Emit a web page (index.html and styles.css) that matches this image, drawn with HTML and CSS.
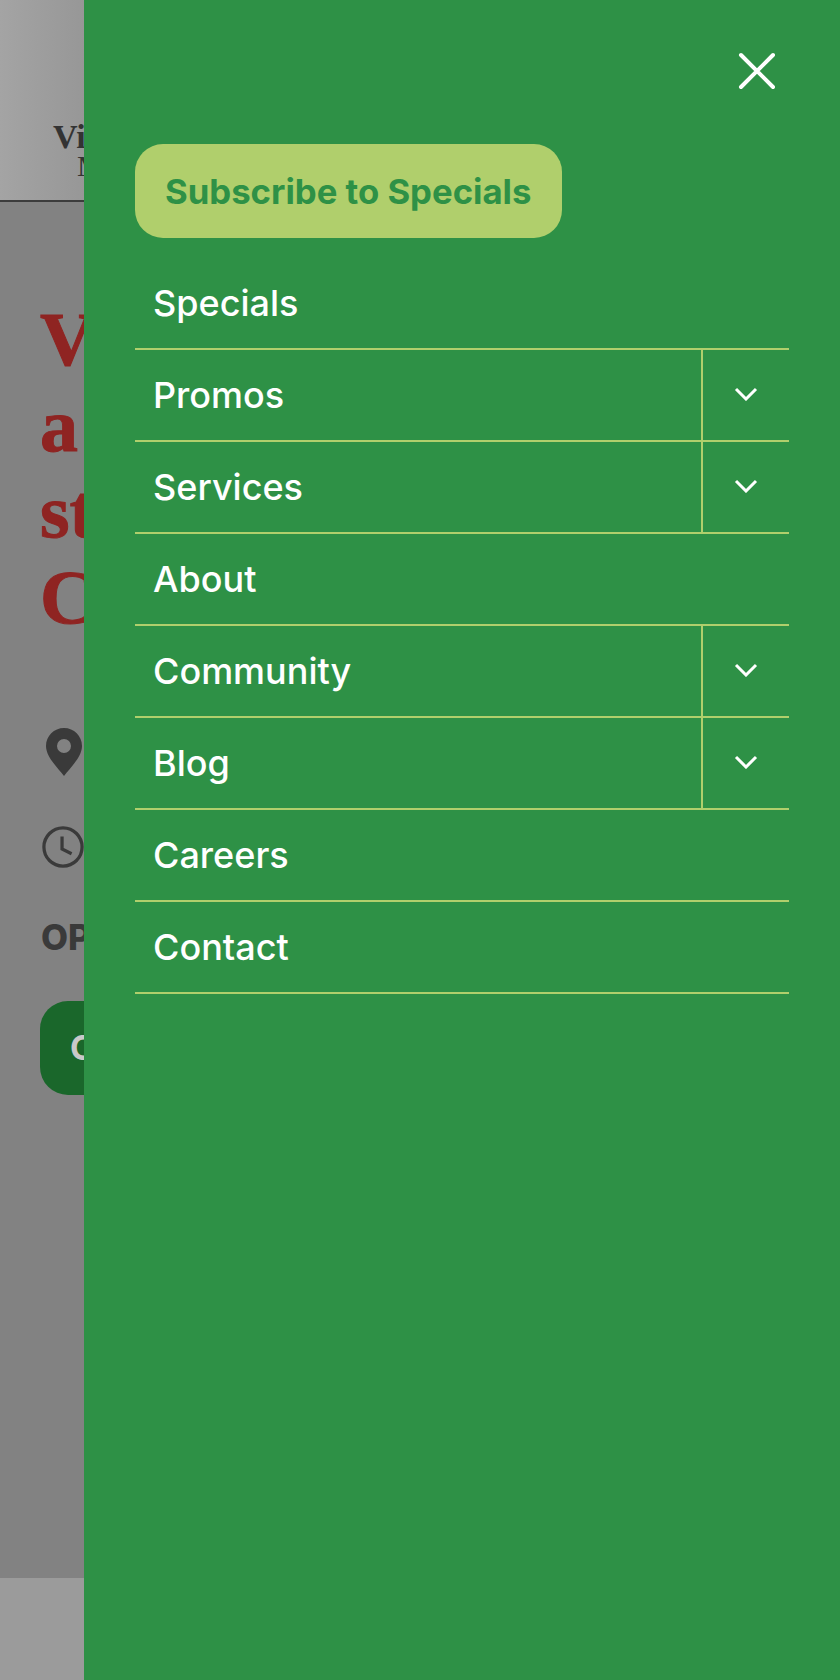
FILE: index.html
```html
<!DOCTYPE html>
<html lang="en">
<head>
<meta charset="UTF-8">
<title>Menu</title>
<link rel="stylesheet" href="styles.css">
</head>
<body>
<div class="page">
  <header class="masthead">
    <div class="logo">
      <span class="logo-top">Vi</span>
      <span class="logo-bottom">M</span>
    </div>
  </header>
  <main class="intro">
    <h1 class="headline">V<br>a<br>st<br>C</h1>
    <div class="info-row info-pin">
      <svg width="36" height="48" viewBox="0 0 36 48"><path fill="#3a3a3a" fill-rule="evenodd" d="M18 0C8 0 0 8 0 18c0 11 12 22 18 30 6-8 18-19 18-30C36 8 28 0 18 0zm0 11a7 7 0 1 1 0 14 7 7 0 0 1 0-14z"/></svg>
    </div>
    <div class="info-row info-clock">
      <svg width="44" height="44" viewBox="0 0 44 44"><circle cx="22" cy="22" r="20" fill="none" stroke="#3a3a3a" stroke-width="3.4"/><path d="M21 11v13l10 5" fill="none" stroke="#3a3a3a" stroke-width="3.4"/></svg>
    </div>
    <p class="open-label">OP</p>
    <a class="cta" href="#">C</a>
  </main>
  <footer class="page-foot"></footer>
</div>

<nav class="drawer">
  <div class="drawer-top">
    <button class="close-btn" aria-label="Close">
      <svg width="38" height="38" viewBox="0 0 38 38"><path d="M3 3l32 32M35 3L3 35" stroke="#fff" stroke-width="4" stroke-linecap="round"/></svg>
    </button>
  </div>
  <a class="subscribe" href="#">Subscribe to Specials</a>
  <ul class="menu">
    <li><a href="#">Specials</a></li>
    <li><a href="#">Promos</a><button class="toggle"><svg width="24" height="14" viewBox="0 0 24 14"><path d="M2 2l10 10L22 2" fill="none" stroke="#fff" stroke-width="3"/></svg></button></li>
    <li><a href="#">Services</a><button class="toggle"><svg width="24" height="14" viewBox="0 0 24 14"><path d="M2 2l10 10L22 2" fill="none" stroke="#fff" stroke-width="3"/></svg></button></li>
    <li><a href="#">About</a></li>
    <li><a href="#">Community</a><button class="toggle"><svg width="24" height="14" viewBox="0 0 24 14"><path d="M2 2l10 10L22 2" fill="none" stroke="#fff" stroke-width="3"/></svg></button></li>
    <li><a href="#">Blog</a><button class="toggle"><svg width="24" height="14" viewBox="0 0 24 14"><path d="M2 2l10 10L22 2" fill="none" stroke="#fff" stroke-width="3"/></svg></button></li>
    <li><a href="#">Careers</a></li>
    <li><a href="#">Contact</a></li>
  </ul>
</nav>
</body>
</html>
```

FILE: styles.css
```css
html, body {
  margin: 0;
  padding: 0;
  height: 100%;
}

body {
  display: flex;
  height: 1680px;
  overflow: hidden;
  background: #2e9146;
  font-family: "Inter", "Liberation Sans", sans-serif;
}

/* page behind the drawer, dimmed */
.page {
  width: 84px;
  flex: none;
  overflow: hidden;
  display: flex;
  flex-direction: column;
  background: #828282;
}

.masthead {
  height: 202px;
  flex: none;
  box-sizing: border-box;
  padding: 120px 0 0 53px;
  background: linear-gradient(to right, #a4a4a4, #979797);
  border-bottom: 2px solid #3c3c3c;
}

.logo {
  font-family: "Liberation Serif", serif;
  color: #333;
  width: 120px;
  white-space: nowrap;
}

.logo-top {
  display: block;
  font-size: 34px;
  font-weight: bold;
  line-height: 34px;
}

.logo-bottom {
  display: block;
  font-size: 30px;
  line-height: 24px;
  margin-left: 24px;
}

.intro {
  flex: 1;
  padding: 0 0 0 40px;
  background: #828282;
}

.headline {
  margin: 94px 0 0 0;
  font-family: "Liberation Serif", serif;
  font-size: 76px;
  line-height: 86px;
  font-weight: bold;
  color: #8f2422;
  -webkit-text-stroke: 1px #8f2422;
  white-space: nowrap;
}

.info-row {
  display: flex;
}

.info-pin {
  margin: 88px 0 0 6px;
}

.info-clock {
  margin: 49px 0 0 2px;
}

.open-label {
  margin: 48px 0 0 1px;
  font-size: 35px;
  line-height: 40px;
  font-weight: 800;
  color: #3a3a3a;
  white-space: nowrap;
}

.cta {
  display: block;
  width: 200px;
  height: 94px;
  margin-top: 44px;
  box-sizing: border-box;
  padding-left: 30px;
  background: #1a672b;
  border-radius: 28px;
  color: #c9c9c9;
  font-size: 34px;
  font-weight: 700;
  line-height: 94px;
  text-decoration: none;
}

.page-foot {
  height: 102px;
  flex: none;
  background: #9b9b9b;
}

/* drawer */
.drawer {
  flex: 1;
  padding: 0 51px;
  background: #2e9146;
}

.drawer-top {
  display: flex;
  justify-content: flex-end;
  height: 144px;
  box-sizing: border-box;
  padding: 52px 13px 0 0;
}

.close-btn {
  width: 38px;
  height: 38px;
  padding: 0;
  border: none;
  background: none;
}

.subscribe {
  display: inline-block;
  height: 94px;
  box-sizing: border-box;
  padding: 0 31px 0 30px;
  background: #b0cf6c;
  border-radius: 28px;
  color: #2e9146;
  font-size: 34.7px;
  font-weight: 700;
  line-height: 94px;
  text-decoration: none;
}

.menu {
  list-style: none;
  margin: 20px 0 0;
  padding: 0;
}

.menu li {
  display: flex;
  height: 92px;
  box-sizing: border-box;
  border-bottom: 2px solid #b0cf6c;
}

.menu a {
  flex: 1;
  padding-left: 18px;
  color: #fff;
  font-size: 36px;
  font-weight: 500;
  line-height: 90px;
  text-decoration: none;
}

.toggle {
  width: 88px;
  flex: none;
  padding: 0;
  border: none;
  border-left: 2px solid #b0cf6c;
  background: none;
}
```
